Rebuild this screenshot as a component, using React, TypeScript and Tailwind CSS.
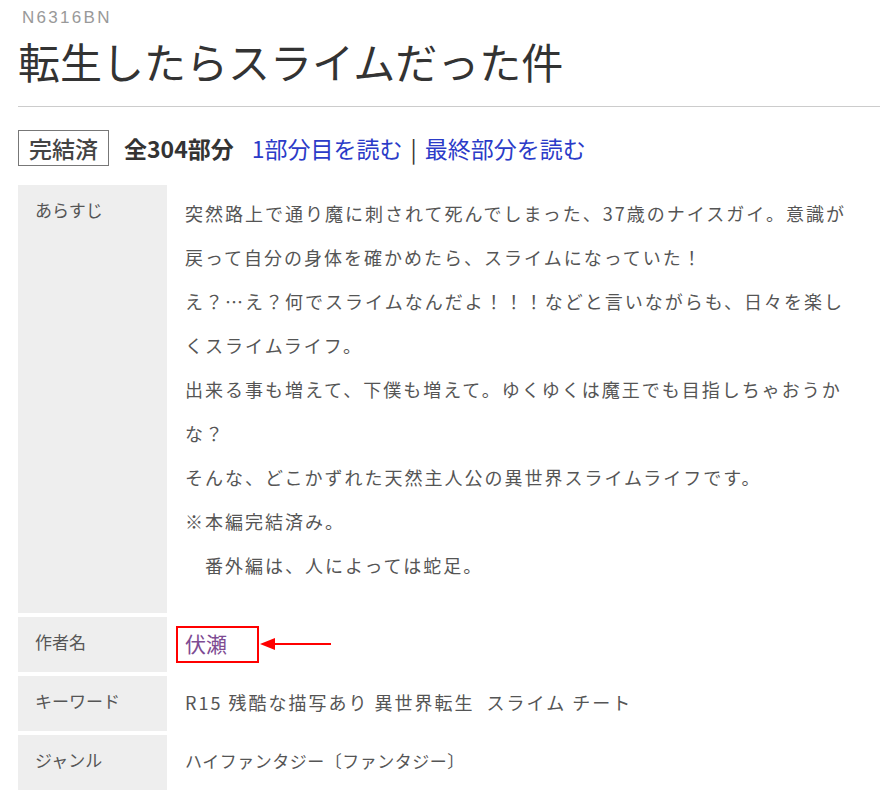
import React from "react";

const jp = { fontFamily: '"Noto Sans CJK JP", "Noto Sans", sans-serif' };

const Row = ({ label, children }: { label: string; children: React.ReactNode }) => (
  <div className="flex h-[55px]">
    <div className="w-[149px] shrink-0 bg-[#eeeeee] pl-[17px] pt-[10px] text-[17px] leading-[30px] text-[#555]">
      {label}
    </div>
    <div className="flex-1 pl-[18px] pr-[20px] pt-[11px] text-[#555]">{children}</div>
  </div>
);

export default function App() {
  return (
    <div className="min-h-screen bg-white pl-[18px] pt-[8px]" style={jp}>
      <p
        className="pl-[4px] text-[17px] leading-[20px] tracking-[2.3px] text-[#999]"
        style={{ fontFamily: '"Liberation Sans", Arial, sans-serif' }}
      >
        N6316BN
      </p>
      <h1 className="mt-[8px] text-[42px] leading-[50px] text-[#333]">転生したらスライムだった件</h1>
      <div className="mt-[20px] border-t border-[#cccccc]" />

      <div className="mt-[23px] flex items-center text-[23px] leading-[30px]">
        <span className="border border-[#777] px-[10px] py-[2px] font-medium text-[#444]">完結済</span>
        <span className="ml-[15px] font-bold text-[#333]">全304部分</span>
        <a className="ml-[18px] text-[#2b3bc8]">1部分目を読む</a>
        <span className="mx-[8px] text-[#333]">|</span>
        <a className="text-[#2b3bc8]">最終部分を読む</a>
      </div>

      <div className="mt-[19px] flex flex-col gap-[4px]">
        <div className="flex">
          <div className="w-[149px] shrink-0 bg-[#eeeeee] pl-[17px] pt-[10px] text-[17px] leading-[30px] text-[#555]">
            あらすじ
          </div>
          <div className="flex-1 pl-[18px] pr-[20px] pt-[6px] pb-[26px] text-[18px] leading-[44px] tracking-[2px] text-[#555]">
            突然路上で通り魔に刺されて死んでしまった、37歳のナイスガイ。意識が戻って自分の身体を確かめたら、スライムになっていた！
            <br />
            え？…え？何でスライムなんだよ！！！などと言いながらも、日々を楽しくスライムライフ。
            <br />
            出来る事も増えて、下僕も増えて。ゆくゆくは魔王でも目指しちゃおうかな？
            <br />
            そんな、どこかずれた天然主人公の異世界スライムライフです。
            <br />
            ※本編完結済み。
            <br />
            {"\u3000番外編は、人によっては蛇足。"}
          </div>
        </div>

        <Row label="作者名">
          <div className="relative">
            <a className="text-[21px] leading-[30px] text-[#7e4b93]">伏瀬</a>
            <div className="absolute left-[-9px] top-[-2px] h-[37px] w-[83px] border-2 border-[#ff0000]" />
            <svg className="absolute left-[75px] top-[9px]" width="72" height="14" viewBox="0 0 72 14">
              <polygon points="0,7 15,1 15,13" fill="#ff0000" />
              <line x1="12" y1="7" x2="71" y2="7" stroke="#ff0000" strokeWidth="2" />
            </svg>
          </div>
        </Row>
        <Row label="キーワード">
          <span className="text-[18px] leading-[30px] tracking-[2px]">
            R15 残酷な描写あり 異世界転生&nbsp;&nbsp;スライム チート
          </span>
        </Row>
        <Row label="ジャンル">
          <span className="text-[17px] leading-[30px] tracking-[0.5px]">ハイファンタジー〔ファンタジー〕</span>
        </Row>
      </div>
    </div>
  );
}
